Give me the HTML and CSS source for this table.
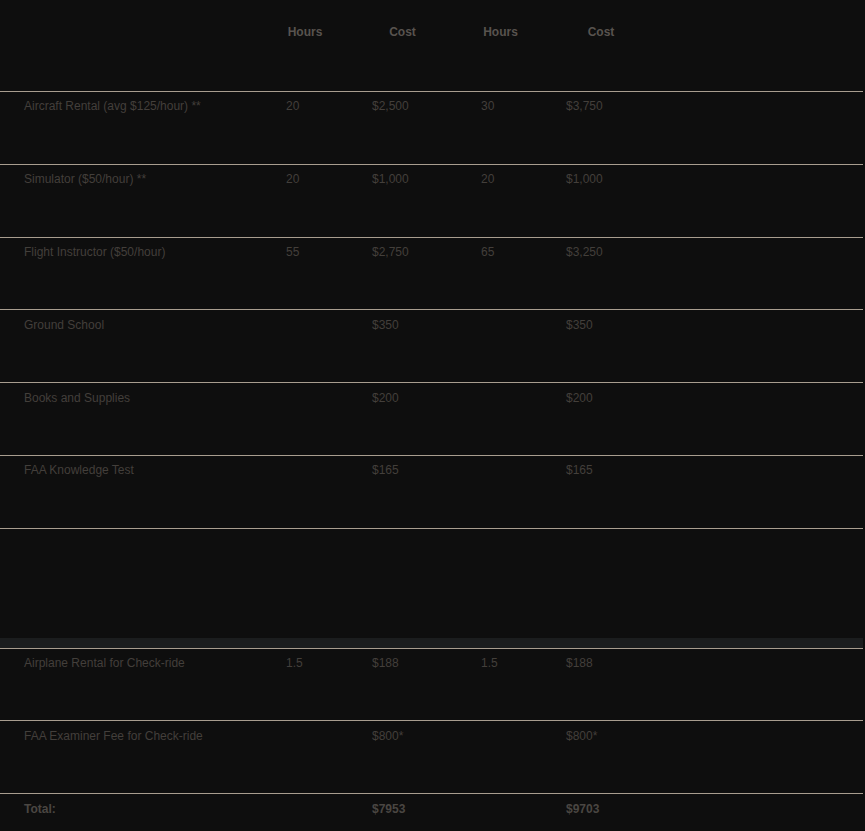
FILE: index.html
```html
<!DOCTYPE html>
<html>
<head>
<meta charset="utf-8">
<link rel="stylesheet" href="styles.css">
</head>
<body>
<table class="costs">
  <colgroup>
    <col class="c-label">
    <col class="c-h1">
    <col class="c-c1">
    <col class="c-h2">
    <col class="c-c2">
    <col class="c-rest">
  </colgroup>
  <thead>
    <tr>
      <th></th>
      <th>Hours</th>
      <th>Cost</th>
      <th class="h-shift">Hours</th>
      <th>Cost</th>
      <th></th>
    </tr>
  </thead>
  <tbody>
    <tr><td>Aircraft Rental (avg $125/hour) **</td><td>20</td><td>$2,500</td><td>30</td><td>$3,750</td><td></td></tr>
    <tr><td>Simulator ($50/hour) **</td><td>20</td><td>$1,000</td><td>20</td><td>$1,000</td><td></td></tr>
    <tr><td>Flight Instructor ($50/hour)</td><td>55</td><td>$2,750</td><td>65</td><td>$3,250</td><td></td></tr>
    <tr><td>Ground School</td><td></td><td>$350</td><td></td><td>$350</td><td></td></tr>
    <tr><td>Books and Supplies</td><td></td><td>$200</td><td></td><td>$200</td><td></td></tr>
    <tr><td>FAA Knowledge Test</td><td></td><td>$165</td><td></td><td>$165</td><td></td></tr>
    <tr class="spacer"><td colspan="6"></td></tr>
    <tr class="band"><td colspan="6"></td></tr>
    <tr><td>Airplane Rental for Check-ride</td><td>1.5</td><td>$188</td><td>1.5</td><td>$188</td><td></td></tr>
    <tr><td>FAA Examiner Fee for Check-ride</td><td></td><td>$800*</td><td></td><td>$800*</td><td></td></tr>
    <tr class="total"><td>Total:</td><td></td><td>$7953</td><td></td><td>$9703</td><td></td></tr>
  </tbody>
</table>
</body>
</html>
```

FILE: styles.css
```css
html, body {
  margin: 0;
  padding: 0;
  background: #0e0e0e;
}

body {
  font-family: "Liberation Sans", Arial, sans-serif;
  font-size: 12px;
  line-height: 13.8px;
}

.costs {
  width: 863px;
  table-layout: fixed;
  border-collapse: separate;
  border-spacing: 0;
}

.c-label { width: 262px; }
.c-h1 { width: 86px; }
.c-c1 { width: 109px; }
.c-h2 { width: 85px; }
.c-c2 { width: 118px; }

.costs th {
  font-weight: bold;
  color: #58534e;
  text-align: center;
  vertical-align: top;
  padding: 26px 0 51.2px;
}

.costs th.h-shift {
  padding-left: 2px;
}

.costs td {
  color: #433f3b;
  text-align: left;
  vertical-align: top;
  padding: 8.4px 0 49.6px 24px;
  border-top: 1px solid #a89d8f;
  white-space: nowrap;
}

.costs tr.spacer td {
  padding: 0;
  height: 109px;
}

.costs tr.band td {
  padding: 0;
  height: 10px;
  border-top: none;
  background: #1b1d1e;
}

.costs tr.total td {
  font-weight: bold;
  color: #4a4642;
}
```
